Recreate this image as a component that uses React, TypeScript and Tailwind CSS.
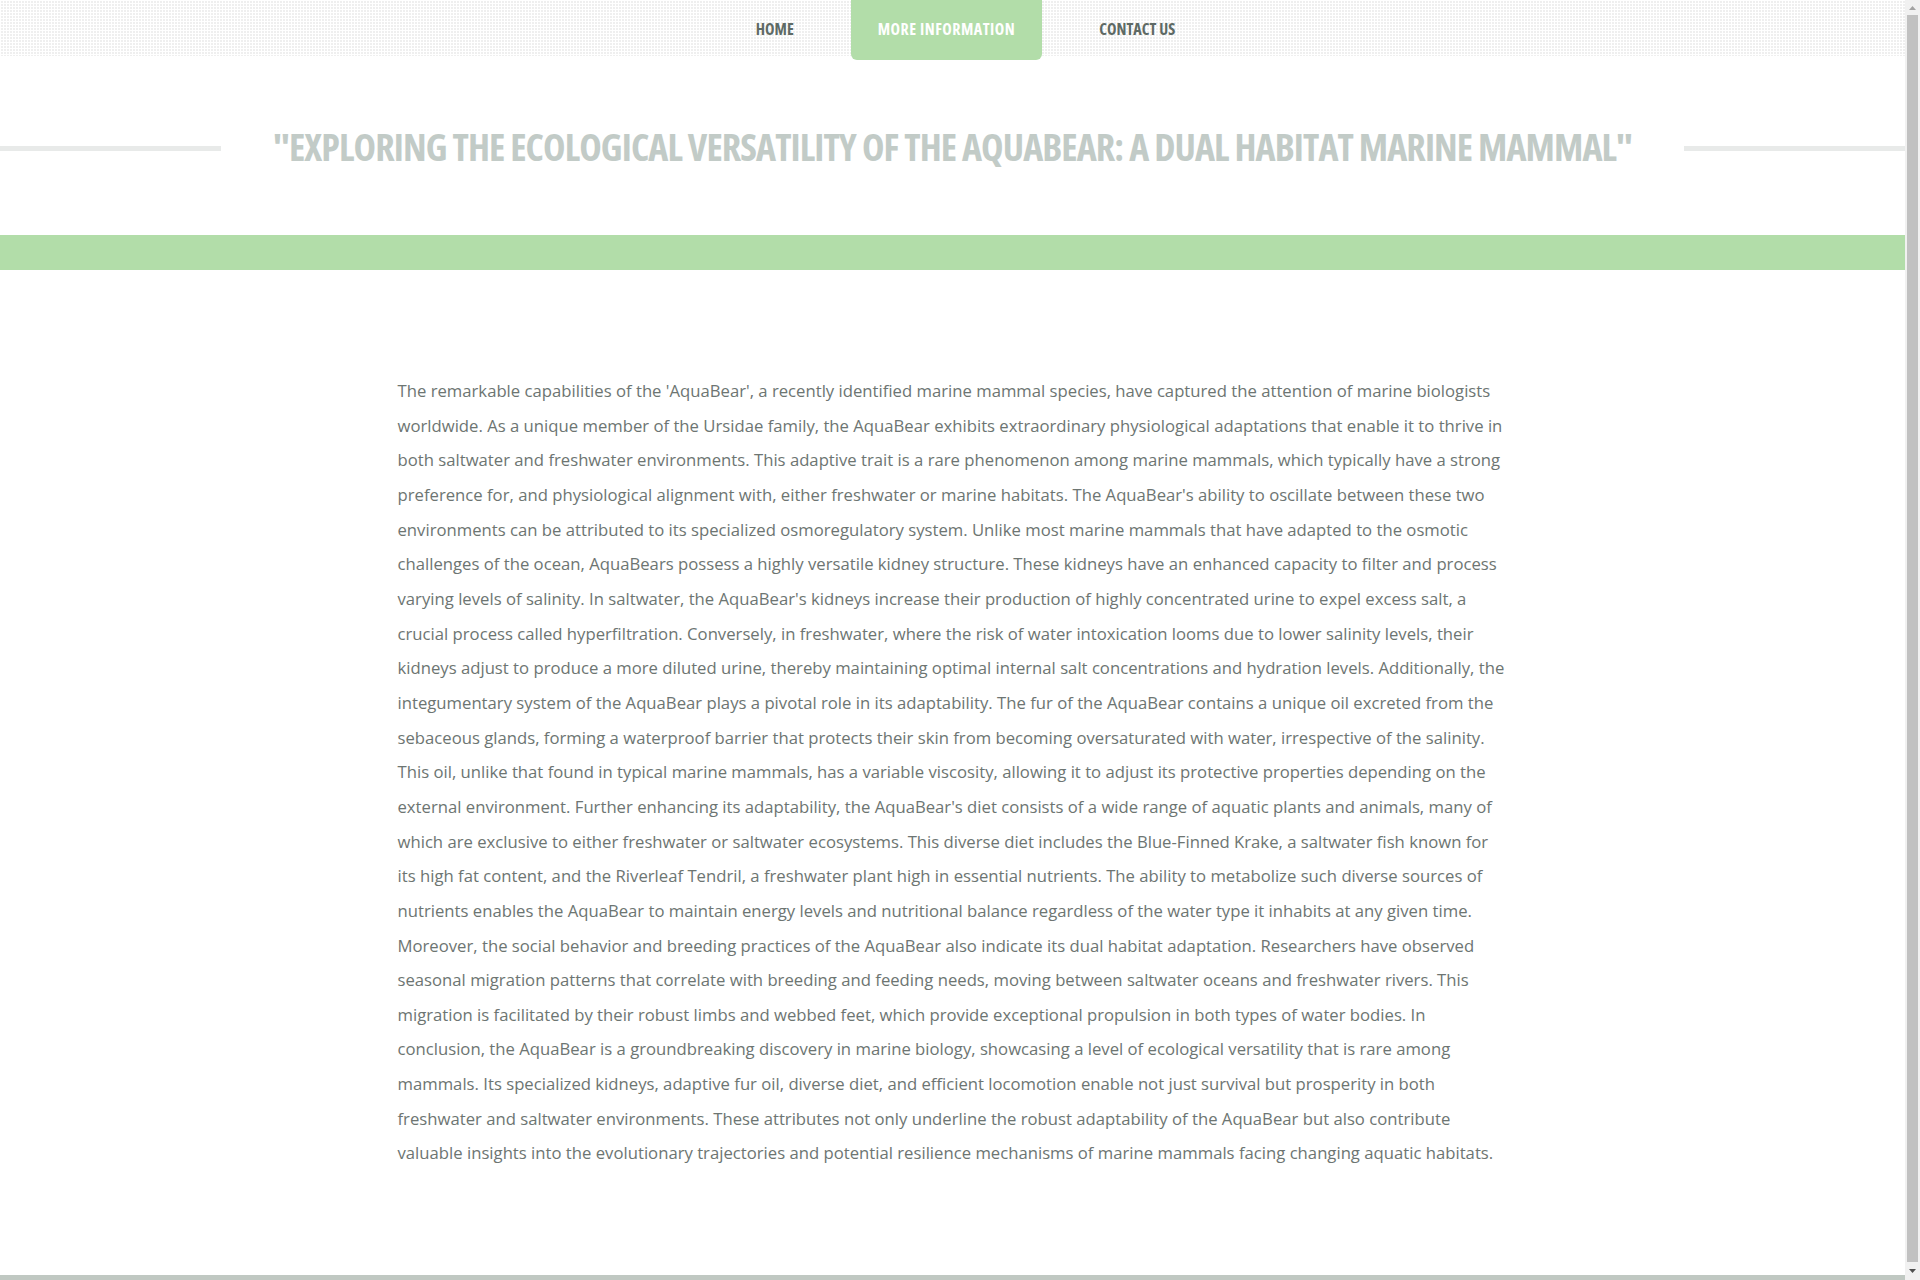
import React from 'react';

const navItems = [
  { label: 'HOME', active: false },
  { label: 'MORE INFORMATION', active: true },
  { label: 'CONTACT US', active: false },
];

const body =
  "The remarkable capabilities of the 'AquaBear', a recently identified marine mammal species, have captured the attention of marine biologists worldwide. As a unique member of the Ursidae family, the AquaBear exhibits extraordinary physiological adaptations that enable it to thrive in both saltwater and freshwater environments. This adaptive trait is a rare phenomenon among marine mammals, which typically have a strong preference for, and physiological alignment with, either freshwater or marine habitats. The AquaBear's ability to oscillate between these two environments can be attributed to its specialized osmoregulatory system. Unlike most marine mammals that have adapted to the osmotic challenges of the ocean, AquaBears possess a highly versatile kidney structure. These kidneys have an enhanced capacity to filter and process varying levels of salinity. In saltwater, the AquaBear's kidneys increase their production of highly concentrated urine to expel excess salt, a crucial process called hyperfiltration. Conversely, in freshwater, where the risk of water intoxication looms due to lower salinity levels, their kidneys adjust to produce a more diluted urine, thereby maintaining optimal internal salt concentrations and hydration levels. Additionally, the integumentary system of the AquaBear plays a pivotal role in its adaptability. The fur of the AquaBear contains a unique oil excreted from the sebaceous glands, forming a waterproof barrier that protects their skin from becoming oversaturated with water, irrespective of the salinity. This oil, unlike that found in typical marine mammals, has a variable viscosity, allowing it to adjust its protective properties depending on the external environment. Further enhancing its adaptability, the AquaBear's diet consists of a wide range of aquatic plants and animals, many of which are exclusive to either freshwater or saltwater ecosystems. This diverse diet includes the Blue-Finned Krake, a saltwater fish known for its high fat content, and the Riverleaf Tendril, a freshwater plant high in essential nutrients. The ability to metabolize such diverse sources of nutrients enables the AquaBear to maintain energy levels and nutritional balance regardless of the water type it inhabits at any given time. Moreover, the social behavior and breeding practices of the AquaBear also indicate its dual habitat adaptation. Researchers have observed seasonal migration patterns that correlate with breeding and feeding needs, moving between saltwater oceans and freshwater rivers. This migration is facilitated by their robust limbs and webbed feet, which provide exceptional propulsion in both types of water bodies. In conclusion, the AquaBear is a groundbreaking discovery in marine biology, showcasing a level of ecological versatility that is rare among mammals. Its specialized kidneys, adaptive fur oil, diverse diet, and efficient locomotion enable not just survival but prosperity in both freshwater and saltwater environments. These attributes not only underline the robust adaptability of the AquaBear but also contribute valuable insights into the evolutionary trajectories and potential resilience mechanisms of marine mammals facing changing aquatic habitats.";

// window scrollbar as seen in the screenshot
const ScrollTrack = () => (
  <div className="w-[15px] shrink-0 bg-[#f1f1f1] flex flex-col">
    <div className="h-[15px] flex items-center justify-center">
      <svg width="7" height="4" viewBox="0 0 7 4">
        <path d="M0 4 L3.5 0 L7 4 Z" fill="#a3a3a3" />
      </svg>
    </div>
    <div className="flex-1 mx-[2px] bg-[#c1c1c1]" />
    <div className="h-[18px] flex items-center justify-center">
      <svg width="7" height="4" viewBox="0 0 7 4">
        <path d="M0 0 L7 0 L3.5 4 Z" fill="#505050" />
      </svg>
    </div>
  </div>
);

export default function App() {
  return (
    <div className="flex h-screen overflow-hidden bg-white font-['Open_Sans',sans-serif]">
      <div className="flex-1 overflow-hidden">
        {/* top navigation with dotted background */}
        <nav className="h-[56px] bg-[linear-gradient(90deg,#fff_1px,transparent_1px),linear-gradient(#fff_1px,#efefef_1px)] bg-[length:3px_3px]">
          <ul className="flex justify-center items-start h-full gap-[31px] pl-[26px]">
            {navItems.map((item) => (
              <li key={item.label}>
                <a
                  href="#"
                  className={`block h-[60px] pt-[17px] text-[16px] font-bold uppercase [font-stretch:75%] ${
                    item.active
                      ? 'bg-[#b2dda9] text-white rounded-b-[6px] px-[27px] tracking-[0.5px]'
                      : 'text-[#5e6a65] px-[26px]'
                  }`}
                >
                  {item.label}
                </a>
              </li>
            ))}
          </ul>
        </nav>

        {/* heading with side rules */}
        <header className="flex items-center mt-[64px] h-[52px]">
          <div className="h-[5px] w-[221px] bg-[#e8eae9] mt-[4px]" />
          <h1 className="flex-1 text-center text-[38px] font-bold uppercase [font-stretch:75%] text-[#c2cbc7] leading-none tracking-[-0.9px]">
            "Exploring the Ecological Versatility of the AquaBear: A Dual Habitat Marine Mammal"
          </h1>
          <div className="h-[5px] w-[221px] bg-[#e8eae9] mt-[4px]" />
        </header>

        <div className="h-[35px] bg-[#b2dda9] mt-[63px]" />

        <main className="w-[1110px] mx-auto pt-[104px] pb-[104px]">
          <p className="text-[16.7px] leading-[34.65px] text-[#6d7572]">{body}</p>
        </main>

        <footer className="h-[90px] bg-[#c0c8c2]" />
      </div>
      <ScrollTrack />
    </div>
  );
}
